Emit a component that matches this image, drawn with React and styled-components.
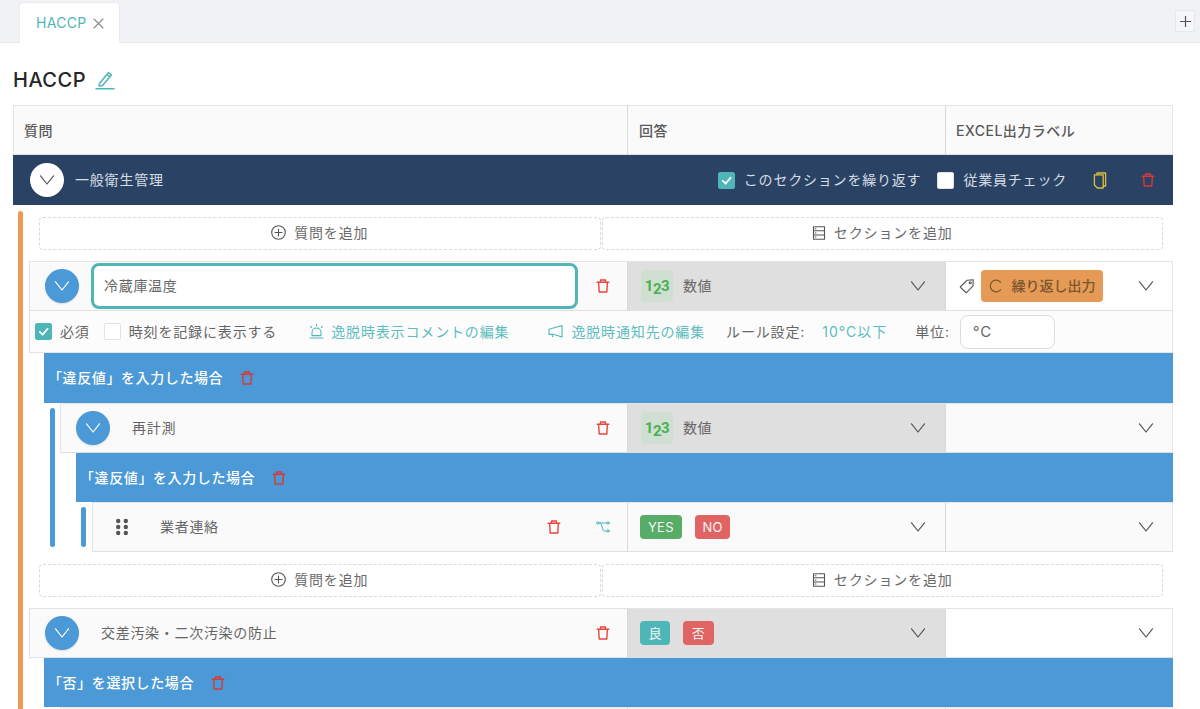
import React from "react";
import styled, { createGlobalStyle } from "styled-components";

const GlobalStyle = createGlobalStyle`
  html, body {
    margin: 0;
    padding: 0;
    height: 709px;
    overflow: hidden;
    background: #fff;
    font-family: Inter, "Noto Sans CJK JP", sans-serif;
    font-size: 14px;
    line-height: 1;
    color: #666;
  }
  * { box-sizing: border-box; }
`;

const teal = "#4fb6b8";
const linkTeal = "#5dbcbe";
const blue = "#4b99d6";
const red = "#e8453c";

// icons
const Svg = ({ size = 16, h, color = "currentColor", sw = 1.5, children, vb = "0 0 16 16" }) => (
  <svg width={size} height={h || size} viewBox={vb} fill="none" stroke={color} strokeWidth={sw} strokeLinecap="round" strokeLinejoin="round" style={{ flexShrink: 0 }}>
    {children}
  </svg>
);

const Chevron = ({ color = "#555", size = 16 }) => (
  <Svg size={size} color={color} sw={1.2}>
    <path d="M1.5 3.8 L8 12 L14.5 3.8" />
  </Svg>
);

const Trash = ({ color = red }) => (
  <Svg size={14} color={color} sw={1.4} vb="0 0 14 14">
    <path d="M1.2 3.2 H12.8 M4.5 3.2 V1 H9.5 V3.2 M2.6 3.2 L3.2 13 H10.8 L11.4 3.2" />
  </Svg>
);

const Pencil = () => (
  <Svg size={20} color={teal} sw={1.5} vb="0 0 20 20">
    <path d="M4.5 13.5 L13.5 2.5 L16.5 5 L7.5 15.5 L4.2 16 Z M12 4.3 L15 6.8" />
    <path d="M1 18.8 H19" />
  </Svg>
);

const PlusCircle = () => (
  <Svg size={15} color="#555" sw={1.1} vb="0 0 15 15">
    <circle cx="7.5" cy="7.5" r="6.8" />
    <path d="M7.5 4 V11 M4 7.5 H11" />
  </Svg>
);

const SectionIcon = () => (
  <Svg size={14} color="#555" sw={1.1} vb="0 0 14 14">
    <rect x="1.5" y="0.8" width="11" height="12.4" />
    <path d="M1.5 4.8 H12.5 M1.5 9 H12.5 M3.2 2.8 H4 M3.2 7 H4 M3.2 11 H4" />
  </Svg>
);

const Copy = () => (
  <Svg size={14} h={17} color="#dcc03c" sw={1.3} vb="0 0 14 17">
    <path d="M4 2.8 V1 H12.6 V14 H10.4" />
    <path d="M1.4 2.8 H10.2 V16 H4.4 L1.4 13 Z" />
  </Svg>
);

const Tag = () => (
  <Svg size={16} color="#555" sw={1.1}>
    <path d="M1.2 9 L8.2 2.2 L14.2 1.8 L14 7.8 L7.2 14.8 Z" />
    <circle cx="11.2" cy="4.8" r="1" />
  </Svg>
);

const Redo = () => (
  <Svg size={14} color="#7a5630" sw={1.2} vb="0 0 14 14">
    <path d="M11.6 3.4 A5.8 5.8 0 1 0 11.6 10.6" />
  </Svg>
);

const Siren = () => (
  <Svg size={15} color={teal} sw={1.1} vb="0 0 15 15">
    <path d="M3 11.6 V8.5 A4.5 4.5 0 0 1 12 8.5 V11.6 Z M1 14 H14 M7.5 0.4 V1.8 M1.6 2.4 L2.6 3.4 M13.4 2.4 L12.4 3.4" />
  </Svg>
);

const Megaphone = () => (
  <Svg size={15} color={teal} sw={1.1} vb="0 0 15 15">
    <path d="M14 1.5 V13 L6 10.4 H1 V5.2 Z M4 10.4 L4.6 12.6" />
  </Svg>
);

const Branch = () => (
  <Svg size={14} color={teal} sw={1} vb="0 0 14 14">
    <circle cx="1.8" cy="3" r="1.2" />
    <circle cx="12" cy="3" r="1.2" />
    <circle cx="12" cy="11" r="1.2" />
    <path d="M3 3 H10.8 M4.6 3 L7.4 10.6 Q7.6 11 8.2 11 H10.8" />
  </Svg>
);

const Grip = () => (
  <Svg size={12} h={18} vb="0 0 12 18" color="none">
    {[3, 9, 15].map((y) =>
      [2.2, 9.8].map((x) => <circle key={`${x}-${y}`} cx={x} cy={y} r="2.2" fill="#555" />)
    )}
  </Svg>
);

const NumberIcon = () => (
  <NumberBadge>
    <span>1</span>
    <NumberLow>2</NumberLow>
    <span>3</span>
  </NumberBadge>
);

// tab bar
const TabBar = styled.div`
  height: 43px;
  background: #f0f2f5;
  border-bottom: 1px solid #e8e8e8;
  padding: 2px 5px 0 19px;
  display: flex;
  justify-content: space-between;
  align-items: flex-start;
`;

const Tab = styled.div`
  width: 101px;
  height: 41px;
  background: #fff;
  border-radius: 4px 4px 0 0;
  border: 1px solid #ebebeb;
  border-bottom: none;
  display: flex;
  align-items: center;
  padding-left: 16px;
  gap: 7px;
  color: ${teal};
  font-size: 14px;
  letter-spacing: 0.3px;
`;

const TabClose = styled.span`
  display: flex;
`;

const AddTab = styled.div`
  width: 20px;
  height: 22px;
  margin-top: 8px;
  border: 1px solid #e8e8e8;
  background: #f5f6f8;
  display: flex;
  align-items: center;
  justify-content: center;
`;

const Content = styled.div`
  padding: 0 27px 0 13px;
`;

const TitleRow = styled.div`
  height: 62px;
  display: flex;
  align-items: center;
  gap: 9px;
  padding-top: 11px;
`;

const Title = styled.h1`
  margin: 0;
  font-size: 20px;
  font-weight: 500;
  color: #262626;
  letter-spacing: 0.5px;
`;

const Row = styled.div`
  display: flex;
  height: ${(p) => p.$h || 50}px;
  background: #fafafa;
  border: 1px solid #e4e4e4;
  border-bottom-color: #e0e0e0;
`;

const TailRow = styled(Row)`
  border-bottom: none;
  margin-left: 31px;
`;

const QuestionCell = styled.div`
  flex: 1;
  min-width: 0;
  display: flex;
  align-items: center;
  padding-left: ${(p) => p.$pad ?? 15}px;
  padding-right: 17px;
  letter-spacing: 0.7px;
`;

const AnswerCell = styled.div`
  width: 318px;
  display: flex;
  align-items: center;
  padding: 0 19px 0 ${(p) => p.$pad ?? 13}px;
  border-left: 1px solid #d8d8d8;
  background: ${(p) => (p.$grey ? "#dfdfdf" : "transparent")};
  letter-spacing: 0.6px;
`;

const LabelCell = styled.div`
  width: 227px;
  display: flex;
  align-items: center;
  padding: 0 18px 0 ${(p) => p.$pad ?? 13}px;
  border-left: 1px solid #d8d8d8;
  background: ${(p) => (p.$white ? "#fff" : "transparent")};
`;

const Pushed = styled.div`
  margin-left: auto;
  display: flex;
  align-items: center;
`;

const HeaderText = styled.div`
  font-weight: 500;
  font-size: 14px;
  color: #595959;
  letter-spacing: 0.5px;
  padding-top: 1px;
`;

const SectionRow = styled.div`
  height: 50px;
  background: #2a4365;
  display: flex;
  align-items: center;
  padding: 0 18px 0 17px;
  color: #d6dce4;
  letter-spacing: 0.8px;
`;

const RoundButton = styled.div`
  width: 34px;
  height: 34px;
  border-radius: 50%;
  flex-shrink: 0;
  background: ${(p) => (p.$white ? "#fff" : blue)};
  display: flex;
  align-items: center;
  justify-content: center;
  box-shadow: 0 1px 2px rgba(0, 0, 0, 0.12);
`;

const QuestionName = styled.span`
  margin-left: ${(p) => p.$gap || 22}px;
`;

const SectionActions = styled.div`
  margin-left: auto;
  display: flex;
  align-items: center;
`;

const Check = styled.span`
  width: 17px;
  height: 17px;
  border-radius: 2px;
  flex-shrink: 0;
  background: ${(p) => (p.$on ? teal : "#fff")};
  border: 1px solid ${(p) => (p.$on ? teal : "#e2e2e2")};
  display: flex;
  align-items: center;
  justify-content: center;
`;

const CheckLabel = styled.label`
  display: flex;
  align-items: center;
  gap: ${(p) => p.$gap || 8}px;
  margin-right: ${(p) => p.$mr || 0}px;
`;

const Body = styled.div`
  display: flex;
  padding-top: 6px;
`;

const Rail = styled.div`
  width: 5px;
  border-radius: ${(p) => (p.$open ? "3px 3px 0 0" : "3px")};
  flex-shrink: 0;
  background: ${(p) => p.$color};
  margin: ${(p) => p.$my || 0}px ${(p) => p.$mr ?? 5}px ${(p) => p.$my || 0}px ${(p) => p.$ml || 5}px;
`;

const Stack = styled.div`
  flex: 1;
  min-width: 0;
  margin-left: ${(p) => p.$ml || 0}px;
`;

const AddBar = styled.div`
  display: flex;
  gap: 1px;
  height: 33px;
  margin: ${(p) => p.$m || "0"};
  padding-right: 10px;
`;

const AddButton = styled.div`
  flex: 1;
  border: 1px dashed #d9d9d9;
  border-radius: 4px;
  background: #fff;
  display: flex;
  align-items: center;
  justify-content: center;
  gap: 8px;
  padding-bottom: 2px;
  letter-spacing: 0.85px;
  color: #6a6a6a;
`;

const NameInput = styled.div`
  flex: 1;
  height: 46px;
  margin-left: 12px;
  margin-right: 18px;
  padding-left: 10px;
  background: #fff;
  border: 3px solid ${teal};
  border-radius: 8px;
  display: flex;
  align-items: center;
`;

const NumberBadge = styled.div`
  width: 32px;
  height: 32px;
  border-radius: 4px;
  background: #cfdfd2;
  color: #4caf50;
  font-weight: 700;
  font-size: 15px;
  letter-spacing: -0.5px;
  display: flex;
  align-items: center;
  justify-content: center;
  margin-right: 10px;
  font-family: Roboto, sans-serif;
`;

const NumberLow = styled.span`
  transform: translateY(3px);
`;

const OutputButton = styled.div`
  height: 32px;
  width: 122px;
  margin-left: 6px;
  background: #e59a55;
  border-radius: 4px;
  color: #7a5630;
  font-weight: 500;
  display: flex;
  align-items: center;
  justify-content: center;
  gap: 9px;
`;

const Options = styled.div`
  height: 42px;
  background: #fcfcfc;
  border: 1px solid #e4e4e4;
  border-top: none;
  display: flex;
  align-items: center;
  padding-left: 5px;
  letter-spacing: 0.85px;
  white-space: nowrap;
`;

const EditLink = styled.span`
  display: flex;
  align-items: center;
  gap: ${(p) => p.$gap || 8}px;
  color: ${linkTeal};
  margin-left: ${(p) => p.$ml}px;
`;

const RuleText = styled.span`
  margin-left: ${(p) => p.$ml}px;
  color: ${(p) => p.$color || "#666"};
  letter-spacing: ${(p) => p.$ls || 0.85}px;
`;

const UnitInput = styled.div`
  width: 95px;
  height: 34px;
  margin-left: 10px;
  border: 1px solid #dcdcdc;
  border-radius: 8px;
  background: #fff;
  display: flex;
  align-items: center;
  padding-left: 12px;
  font-size: 15px;
`;

const BranchHead = styled.div`
  height: ${(p) => p.$height || 50}px;
  margin-left: ${(p) => p.$ml || 15}px;
  background: ${blue};
  color: #fff;
  font-weight: 500;
  letter-spacing: 0.6px;
  display: flex;
  align-items: center;
  padding-left: 4px;
  gap: 17px;
`;

const Pill = styled.span`
  height: 24px;
  padding: 0 ${(p) => p.$px || 8}px;
  border-radius: 4px;
  background: ${(p) => p.$bg};
  color: #f4f4f4;
  font-size: 13px;
  letter-spacing: 0.3px;
  margin-right: 13px;
  display: flex;
  align-items: center;
`;

const Nested = styled.div`
  display: flex;
  margin-left: ${(p) => p.$ml || 0}px;
`;

const IconGap = styled.span`
  display: flex;
  margin-left: ${(p) => p.$ml}px;
`;

const Tick = () => (
  <Svg size={11} color="#fff" sw={2} vb="0 0 12 12">
    <path d="M2 6.5 L5 9.5 L10.5 3" />
  </Svg>
);

const AddRow = ({ m }) => (
  <AddBar $m={m}>
    <AddButton><PlusCircle />質問を追加</AddButton>
    <AddButton><SectionIcon />セクションを追加</AddButton>
  </AddBar>
);

const LabelChevron = ({ children, white }) => (
  <LabelCell $white={white}>
    {children}
    <Pushed><Chevron /></Pushed>
  </LabelCell>
);

const AnswerNumber = () => (
  <AnswerCell $grey>
    <NumberIcon />数値
    <Pushed><Chevron /></Pushed>
  </AnswerCell>
);

export default function App() {
  return (
    <>
      <GlobalStyle />
      <TabBar>
        <Tab>
          HACCP
          <TabClose>
            <Svg size={11} color="#888" sw={1.1} vb="0 0 11 11"><path d="M1 1 L10 10 M10 1 L1 10" /></Svg>
          </TabClose>
        </Tab>
        <AddTab>
          <Svg size={11} color="#555" sw={1.2} vb="0 0 11 11"><path d="M5.5 0.5 V10.5 M0.5 5.5 H10.5" /></Svg>
        </AddTab>
      </TabBar>

      <Content>
        <TitleRow>
          <Title>HACCP</Title>
          <Pencil />
        </TitleRow>

        <Row>
          <QuestionCell $pad={10}><HeaderText>質問</HeaderText></QuestionCell>
          <AnswerCell $pad={11}><HeaderText>回答</HeaderText></AnswerCell>
          <LabelCell $pad={10}><HeaderText>EXCEL出力ラベル</HeaderText></LabelCell>
        </Row>

        <SectionRow>
          <RoundButton $white><Chevron /></RoundButton>
          <QuestionName $gap={11}>一般衛生管理</QuestionName>
          <SectionActions>
            <CheckLabel $gap={9} $mr={16}><Check $on><Tick /></Check>このセクションを繰り返す</CheckLabel>
            <CheckLabel $gap={9}><Check />従業員チェック</CheckLabel>
            <IconGap $ml={26}><Copy /></IconGap>
            <IconGap $ml={34}><Trash color="#d63a36" /></IconGap>
          </SectionActions>
        </SectionRow>

        <Body>
          <Rail $color="#ee9a55" $open />
          <Stack $ml={1}>
            <AddRow m="6px 0 11px 10px" />

            <Row>
              <QuestionCell>
                <RoundButton><Chevron color="#fff" /></RoundButton>
                <NameInput>冷蔵庫温度</NameInput>
                <Trash />
              </QuestionCell>
              <AnswerNumber />
              <LabelChevron white>
                <Tag />
                <OutputButton><Redo />繰り返し出力</OutputButton>
              </LabelChevron>
            </Row>
            <Options>
              <CheckLabel $mr={14}><Check $on><Tick /></Check>必須</CheckLabel>
              <CheckLabel><Check />時刻を記録に表示する</CheckLabel>
              <EditLink $ml={32} $gap={7}><Siren />逸脱時表示コメントの編集</EditLink>
              <EditLink $ml={39}><Megaphone />逸脱時通知先の編集</EditLink>
              <RuleText $ml={21}>ルール設定:</RuleText>
              <RuleText $ml={17} $color={linkTeal} $ls={1}>10°C以下</RuleText>
              <RuleText $ml={28}>単位:</RuleText>
              <UnitInput>°C</UnitInput>
            </Options>

            <BranchHead>「違反値」を入力した場合<Trash color="#d63a36" /></BranchHead>
            <Nested $ml={15}>
              <Rail $color={blue} $ml={6} $my={5} />
              <Stack>
                <Row>
                  <QuestionCell>
                    <RoundButton><Chevron color="#fff" /></RoundButton>
                    <QuestionName>再計測</QuestionName>
                    <Pushed><Trash /></Pushed>
                  </QuestionCell>
                  <AnswerNumber />
                  <LabelChevron />
                </Row>
                <BranchHead $height={49} $ml={16}>「違反値」を入力した場合<Trash color="#d63a36" /></BranchHead>
                <Nested $ml={16}>
                  <Rail $color={blue} $ml={5} $mr={6} $my={5} />
                  <Stack>
                    <Row>
                      <QuestionCell $pad={23}>
                        <Grip />
                        <QuestionName $gap={32}>業者連絡</QuestionName>
                        <Pushed>
                          <Trash />
                          <IconGap $ml={35}><Branch /></IconGap>
                        </Pushed>
                      </QuestionCell>
                      <AnswerCell $pad={12}>
                        <Pill $bg="#57ad68">YES</Pill>
                        <Pill $bg="#e06464" $px={7.5}>NO</Pill>
                        <Pushed><Chevron /></Pushed>
                      </AnswerCell>
                      <LabelChevron />
                    </Row>
                  </Stack>
                </Nested>
              </Stack>
            </Nested>

            <AddRow m="12px 0 11px 10px" />

            <Row>
              <QuestionCell>
                <RoundButton><Chevron color="#fff" /></RoundButton>
                <QuestionName>交差汚染・二次汚染の防止</QuestionName>
                <Pushed><Trash /></Pushed>
              </QuestionCell>
              <AnswerCell $grey $pad={12}>
                <Pill $bg={teal} $px={8.5}>良</Pill>
                <Pill $bg="#e06464" $px={8.5}>否</Pill>
                <Pushed><Chevron /></Pushed>
              </AnswerCell>
              <LabelChevron white />
            </Row>
            <BranchHead $height={49}>「否」を選択した場合<Trash color="#d63a36" /></BranchHead>
            <TailRow $h={2}>
              <QuestionCell />
              <AnswerCell />
              <LabelCell />
            </TailRow>
          </Stack>
        </Body>
      </Content>
    </>
  );
}
